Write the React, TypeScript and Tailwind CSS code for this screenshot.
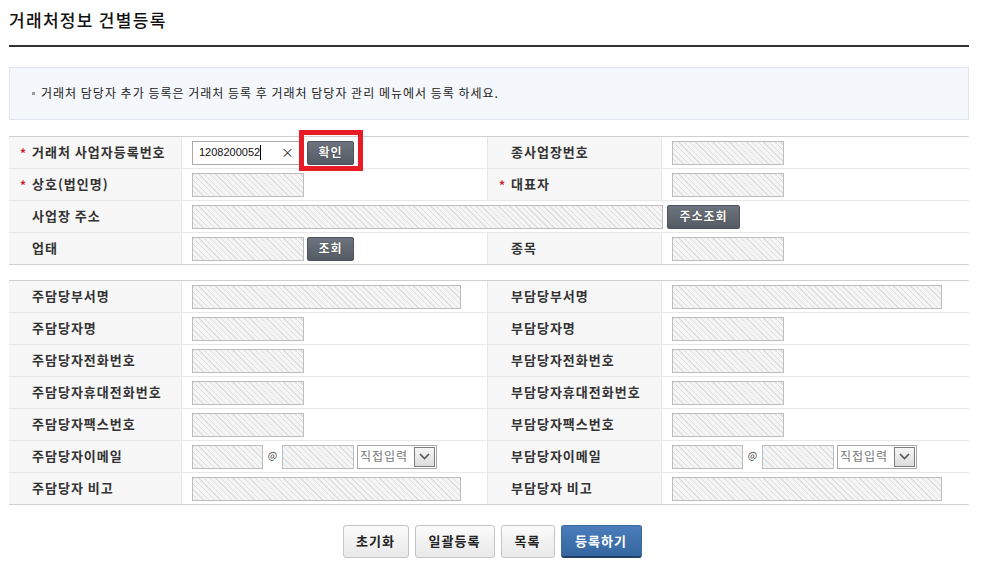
const hatch =
  'h-6 border border-[#bdbdbd] bg-[repeating-linear-gradient(45deg,#f5f5f5_0px,#f5f5f5_3px,#dedede_3px,#dedede_4px)]';

const darkBtn =
  'h-6 rounded-[2px] bg-gradient-to-b from-[#6d747e] to-[#545b65] border border-[#4d535c] text-white text-[12px] font-bold leading-none tracking-[1px] flex items-center justify-center pb-[1px] [text-shadow:0_0_1px_#222]';

function Label({ text, required, wide }: { text: string; required?: boolean; wide?: boolean }) {
  return (
    <div
      className={`${wide ? 'w-[174px]' : 'w-[173px]'} shrink-0 h-full bg-[#f7f7f7] border-r border-[#e6e6e6] flex items-center pl-[11px] pb-[3px] text-[13px] font-bold text-[#333] leading-none tracking-[1px]`}
    >
      <span className="w-[12px] text-[#d0202a] text-[12px] font-bold mt-[3px]">{required ? '*' : ''}</span>
      <span>{text}</span>
    </div>
  );
}

function Row({ children, first }: { children: React.ReactNode; first?: boolean }) {
  return (
    <div className={`flex h-8 border-t ${first ? 'border-[#cfcfcf]' : 'border-[#e8e8e8]'}`}>{children}</div>
  );
}

function Value({ children, left }: { children?: React.ReactNode; left?: boolean }) {
  return (
    <div
      className={`${left ? 'w-[306px] border-r border-[#e6e6e6]' : 'flex-1'} shrink-0 h-full flex items-center pl-[10px]`}
    >
      {children}
    </div>
  );
}

function EmailField() {
  return (
    <div className="flex items-center">
      <div className={`${hatch} w-[71px]`} />
      <span className="w-[19px] text-center text-[10px] text-[#444] leading-none pb-[3px]">@</span>
      <div className={`${hatch} w-[72px]`} />
      <div className="ml-[3px] w-[80px] h-6 border border-[#a9a9a9] bg-white flex items-center justify-between pl-[2px] pr-[1px]">
        <span className="text-[12px] text-[#777] leading-none tracking-[1px] pb-[2px]">직접입력</span>
        <span className="w-[21px] h-[20px] border border-[#7d7d7d] bg-gradient-to-b from-[#f6f6f6] to-[#dcdcdc] flex items-center justify-center">
          <svg width="11" height="7" viewBox="0 0 11 7" fill="none">
            <path d="M1 1l4.5 4.5L10 1" stroke="#555" strokeWidth="1.6" />
          </svg>
        </span>
      </div>
    </div>
  );
}

export default function App() {
  const contacts: [string, string, 'wide' | 'small' | 'email'][] = [
    ['주담당부서명', '부담당부서명', 'wide'],
    ['주담당자명', '부담당자명', 'small'],
    ['주담당자전화번호', '부담당자전화번호', 'small'],
    ['주담당자휴대전화번호', '부담당자휴대전화번호', 'small'],
    ['주담당자팩스번호', '부담당자팩스번호', 'small'],
    ['주담당자이메일', '부담당자이메일', 'email'],
    ['주담당자 비고', '부담당자 비고', 'wide'],
  ];

  const field = (kind: 'wide' | 'small' | 'email', right?: boolean) => {
    if (kind === 'email') return <EmailField />;
    if (kind === 'wide') return <div className={`${hatch} ${right ? 'w-[270px]' : 'w-[269px]'}`} />;
    return <div className={`${hatch} w-[112px]`} />;
  };

  return (
    <div className="w-[982px] min-h-[579px] bg-white font-['Noto_Sans_CJK_KR','Noto_Sans',sans-serif] text-[#222]">
      <div className="ml-[9px] w-[960px]">
        <div className="h-[47px] border-b-2 border-[#333] pt-[10px]">
          <h1 className="text-[17px] leading-[20px] text-[#111] font-medium tracking-[1.3px]">거래처정보 건별등록</h1>
        </div>

        <div className="mt-[20px] h-[53px] border border-[#dfe5ee] bg-[#f4f7fb] flex items-center pl-[22px] pb-[2px]">
          <span className="w-[3px] h-[3px] bg-[#9a9a9a] mr-[6px] mt-[1px]" />
          <span className="text-[12px] leading-none text-[#222] tracking-[1px]">
            거래처 담당자 추가 등록은 거래처 등록 후 거래처 담당자 관리 메뉴에서 등록 하세요.
          </span>
        </div>

        <div className="mt-[16px] border-b border-[#cfcfcf]">
          <Row first>
            <Label text="거래처 사업자등록번호" required />
            <Value left>
              <div className="w-[112px] h-6 border border-[#a9a9a9] bg-white flex items-center pl-[6px] pr-[9px]">
                <span className="text-[11px] leading-none text-[#111] font-['Liberation_Sans',sans-serif]">1208200052</span>
                <span className="w-px h-[15px] bg-black" />
                <span className="ml-auto text-[13px] leading-none text-[#333] pb-[2px]">×</span>
              </div>
              <div className="relative ml-[3px]">
                <div className={`${darkBtn} w-[47px]`}>확인</div>
                <div className="absolute left-[-8px] right-[-9px] top-[-11px] bottom-[-6px] border-[5px] border-[#e81c24]" />
              </div>
            </Value>
            <Label text="종사업장번호" wide />
            <Value>
              <div className={`${hatch} w-[112px]`} />
            </Value>
          </Row>
          <Row>
            <Label text="상호(법인명)" required />
            <Value left>
              <div className={`${hatch} w-[112px]`} />
            </Value>
            <Label text="대표자" required wide />
            <Value>
              <div className={`${hatch} w-[112px]`} />
            </Value>
          </Row>
          <Row>
            <Label text="사업장 주소" />
            <Value>
              <div className={`${hatch} w-[471px]`} />
              <div className={`${darkBtn} w-[73px] ml-[4px]`}>주소조회</div>
            </Value>
          </Row>
          <Row>
            <Label text="업태" />
            <Value left>
              <div className={`${hatch} w-[112px]`} />
              <div className={`${darkBtn} w-[47px] ml-[3px]`}>조회</div>
            </Value>
            <Label text="종목" wide />
            <Value>
              <div className={`${hatch} w-[112px]`} />
            </Value>
          </Row>
        </div>

        <div className="mt-[15px] border-b border-[#cfcfcf]">
          {contacts.map(([l, r, kind], i) => (
            <Row key={l} first={i === 0}>
              <Label text={l} />
              <Value left>{field(kind)}</Value>
              <Label text={r} wide />
              <Value>{field(kind, true)}</Value>
            </Row>
          ))}
        </div>
      </div>

      <div className="mt-[20px] flex justify-center gap-[6px] pl-[2px]">
        {['초기화', '일괄등록', '목록'].map((t, i) => (
          <button
            key={t}
            className={`${['w-[66px]', 'w-[80px]', 'w-[54px]'][i]} h-[33px] rounded-[3px] border border-[#c4c4c4] bg-gradient-to-b from-[#fbfbfb] to-[#e9e9e9] text-[13px] font-bold text-[#222] leading-none tracking-[1px] pb-[2px]`}
          >
            {t}
          </button>
        ))}
        <button className="w-[81px] h-[33px] rounded-[3px] border border-[#3a6aa0] border-b-[#1f3f66] border-b-2 bg-gradient-to-b from-[#4a7dba] to-[#3566a0] text-[13px] font-bold text-white leading-none tracking-[1px] pb-[1px]">
          등록하기
        </button>
      </div>
    </div>
  );
}
